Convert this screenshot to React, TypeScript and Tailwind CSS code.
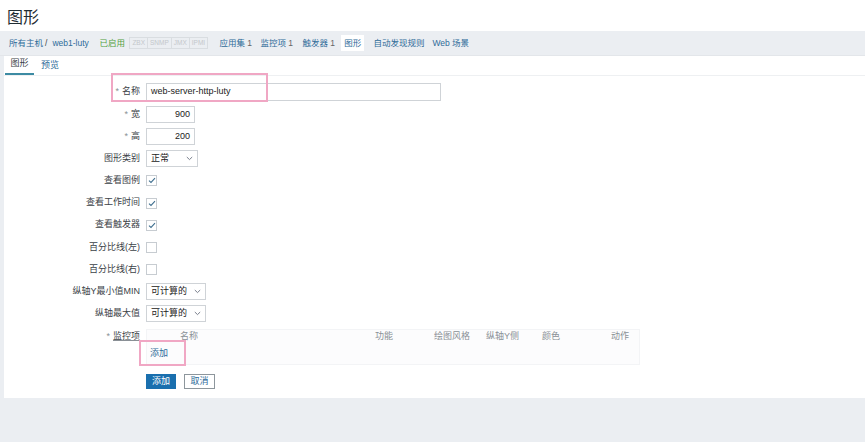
import React from "react";

const font = { fontFamily: '"Liberation Sans", "Noto Sans CJK SC", sans-serif' };

function Chevron() {
  return (
    <svg width="7" height="5" viewBox="0 0 7 5" className="ml-auto">
      <path d="M0.8 1 L3.5 3.6 L6.2 1" fill="none" stroke="#6b7280" strokeWidth="0.9" />
    </svg>
  );
}

function Check({ on }: { on: boolean }) {
  return (
    <div className="w-[11px] h-[11px] border border-[#c7ccd1] bg-white flex items-center justify-center">
      {on && (
        <svg width="8" height="7" viewBox="0 0 8 7">
          <path d="M1 3.6 L3 5.4 L7 1.2" fill="none" stroke="#3f6f8f" strokeWidth="1.1" />
        </svg>
      )}
    </div>
  );
}

function Row({ label, req, children }: { label: string; req?: boolean; children?: React.ReactNode }) {
  return (
    <div className="flex items-center h-[22.2px]">
      <div className="w-[136px] text-right text-[#3b4247]">
        {req && <span className="text-[#8a9096] mr-[3px]">*</span>}
        <span>{label}</span>
      </div>
      <div className="ml-[6px] flex items-center">{children}</div>
    </div>
  );
}

export default function App() {
  return (
    <div className="w-[865px] h-[442px] bg-[#ebeef2] relative overflow-hidden text-[9px]" style={font}>
      <div className="bg-white h-[31px] flex items-center pl-[7px] pt-[4px]">
        <span className="text-[16px] text-[#1f2c33]">图形</span>
      </div>
      <div className="h-[25px] bg-[#ebeef2] flex items-center pl-[9px] text-[#2e6b99] text-[8.5px] whitespace-nowrap border-b border-[#e3e6ea]">
        <span className="shrink-0 w-[34px]">所有主机</span>
        <span className="shrink-0 ml-[2px] text-[#444]">/</span>
        <span className="shrink-0 ml-[5px] w-[34px]">web1-luty</span>
        <span className="shrink-0 ml-[13px] w-[23px] text-[#53a13f]">已启用</span>
        <div className="shrink-0 ml-[7px] w-[78px] flex text-[6.5px] text-[#c3c7cb]">
          <span className="border border-[#d9dde1] px-[2px] leading-[10px]">ZBX</span>
          <span className="border border-l-0 border-[#d9dde1] px-[2px] leading-[10px]">SNMP</span>
          <span className="border border-l-0 border-[#d9dde1] px-[2px] leading-[10px]">JMX</span>
          <span className="border border-l-0 border-[#d9dde1] px-[2px] leading-[10px]">IPMI</span>
        </div>
        <span className="shrink-0 ml-[12px] w-[29px]">应用集 <span className="text-[#666]">1</span></span>
        <span className="shrink-0 ml-[12px] w-[29px]">监控项 <span className="text-[#666]">1</span></span>
        <span className="shrink-0 ml-[13px] w-[30px]">触发器 <span className="text-[#666]">1</span></span>
        <span className="shrink-0 ml-[9px] w-[23px] text-center bg-white py-[2px]">图形</span>
        <span className="shrink-0 ml-[9px] w-[44px]">自动发现规则</span>
        <span className="shrink-0 ml-[15px]">Web 场景</span>
      </div>
      <div className="ml-[4px] bg-white h-[342px]">
        <div className="h-[20px] flex items-end border-b border-[#eef0f2]">
          <div className="w-[29px] text-center text-[#3b4247] border-b-2 border-[#3d8ba3] pb-[3px] ml-[1px]">图形</div>
          <div className="ml-[7px] text-[#2e6b99] pb-[3px]">预览</div>
        </div>
        <div className="pt-[5px]">
          <Row label="名称" req>
            <div className="w-[295px] h-[18px] border border-[#cfd3d7] flex items-center px-[4px] text-[#222]">web-server-http-luty</div>
          </Row>
          <Row label="宽" req>
            <div className="w-[49px] h-[17px] border border-[#cfd3d7] flex items-center justify-end px-[4px] text-[#222]">900</div>
          </Row>
          <Row label="高" req>
            <div className="w-[49px] h-[17px] border border-[#cfd3d7] flex items-center justify-end px-[4px] text-[#222]">200</div>
          </Row>
          <Row label="图形类别">
            <div className="w-[52px] h-[17px] border border-[#cfd3d7] flex items-center px-[4px] text-[#222]">
              正常
              <Chevron />
            </div>
          </Row>
          <Row label="查看图例"><Check on /></Row>
          <Row label="查看工作时间"><Check on /></Row>
          <Row label="查看触发器"><Check on /></Row>
          <Row label="百分比线(左)"><Check on={false} /></Row>
          <Row label="百分比线(右)"><Check on={false} /></Row>
          <Row label="纵轴Y最小值MIN">
            <div className="w-[60px] h-[17px] border border-[#cfd3d7] flex items-center px-[4px] text-[#222]">
              可计算的
              <Chevron />
            </div>
          </Row>
          <Row label="纵轴最大值">
            <div className="w-[60px] h-[17px] border border-[#cfd3d7] flex items-center px-[4px] text-[#222]">
              可计算的
              <Chevron />
            </div>
          </Row>
          <div className="flex mt-[4px]">
            <div className="w-[136px] text-right text-[#3b4247] pt-[1px]">
              <span className="text-[#8a9096] mr-[3px]">*</span>
              <span className="underline decoration-[#8a9096]">监控项</span>
            </div>
            <div className="ml-[6px] w-[494px] h-[36px] bg-[#fcfcfd] border border-[#f3f4f6]">
              <div className="flex text-[#8a9096] h-[14px] items-center">
                <span className="ml-[33px]">名称</span>
                <span className="ml-[177px]">功能</span>
                <span className="ml-[41px]">绘图风格</span>
                <span className="ml-[16px]">纵轴Y侧</span>
                <span className="ml-[23px]">颜色</span>
                <span className="ml-[51px]">动作</span>
              </div>
              <div className="mt-[3px] ml-[3px] text-[#2e6b99]">添加</div>
            </div>
          </div>
          <div className="flex ml-[142px] mt-[9px] gap-[8px]">
            <div className="w-[30px] h-[15px] bg-[#1a6fae] text-white flex items-center justify-center">添加</div>
            <div className="w-[31px] h-[15px] bg-white border border-[#8d969c] text-[#2e6b99] flex items-center justify-center">取消</div>
          </div>
        </div>
      </div>
      <div className="absolute left-[111px] top-[73px] w-[157px] h-[29px] border-2 border-[#f0a7c4]" />
      <div className="absolute left-[139px] top-[340px] w-[47px] h-[26px] border-2 border-[#f0a7c4]" />
    </div>
  );
}
